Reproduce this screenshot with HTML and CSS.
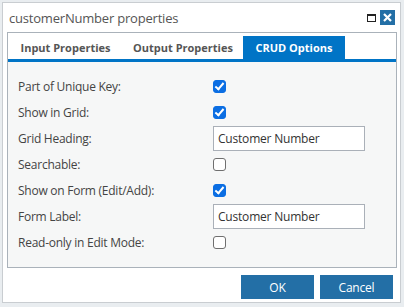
FILE: index.html
```html
<!DOCTYPE html>
<html lang="en">
<head>
    <meta charset="utf-8">
    <title>customerNumber properties</title>
    <link rel="stylesheet" href="styles.css">
</head>
<body>
    <div class="dialog">
        <div class="titlebar">
            <span class="title">customerNumber properties</span>
            <span class="max-btn"></span>
            <span class="close-btn">
                <svg width="15" height="15" viewBox="0 0 15 15">
                    <path d="M4 4 L11 11 M11 4 L4 11" stroke="#fff" stroke-width="2.2" fill="none"/>
                </svg>
            </span>
        </div>

        <div class="panel">
            <div class="tabs">
                <div class="tab">Input Properties</div>
                <div class="tab">Output Properties</div>
                <div class="tab active">CRUD Options</div>
            </div>
            <div class="form">
                <label class="lbl">Part of Unique Key:</label>
                <span class="check on"></span>

                <label class="lbl">Show in Grid:</label>
                <span class="check on"></span>

                <label class="lbl">Grid Heading:</label>
                <input class="txt" type="text" value="Customer Number">

                <label class="lbl">Searchable:</label>
                <span class="check"></span>

                <label class="lbl">Show on Form (Edit/Add):</label>
                <span class="check on"></span>

                <label class="lbl">Form Label:</label>
                <input class="txt" type="text" value="Customer Number">

                <label class="lbl">Read-only in Edit Mode:</label>
                <span class="check"></span>
            </div>
        </div>

        <div class="buttons">
            <button class="btn">OK</button>
            <button class="btn">Cancel</button>
        </div>
    </div>
</body>
</html>
```

FILE: styles.css
```css
body {
    margin: 0;
    padding: 2px;
    background: #e9edf0;
    font-family: 'Open Sans', sans-serif;
    height: 307px;
    box-sizing: border-box;
    overflow: hidden;
}

.dialog {
    width: 399px;
    height: 301px;
    box-sizing: border-box;
    background: #fff;
    border: 1px solid #c9cdd1;
    display: flex;
    flex-direction: column;
}

/* title bar */
.titlebar {
    height: 29px;
    display: flex;
    align-items: center;
    padding: 0 5px 0 6px;
}

.title {
    flex: 1;
    font-size: 13px;
    color: #555;
    letter-spacing: -0.2px;
}

.max-btn {
    width: 7px;
    height: 5px;
    border: 1.5px solid #222;
    border-top-width: 2px;
    margin-right: 4px;
}

.close-btn {
    width: 15px;
    height: 15px;
    background: #236fa6;
    display: flex;
}

/* tabbed panel */
.panel {
    margin: 0 3px 0 4px;
    height: 236px;
    box-sizing: border-box;
    border: 1px solid #aab2ba;
    display: flex;
    flex-direction: column;
}

.tabs {
    display: flex;
    height: 26px;
    border-bottom: 3px solid #0074c6;
    align-items: flex-end;
}

.tab {
    height: 23px;
    display: flex;
    align-items: center;
    justify-content: center;
    font-size: 11px;
    font-weight: 700;
    color: #555;
}

.tab:nth-child(1) { width: 115px; }
.tab:nth-child(2) { width: 120px; }
.tab:nth-child(3) { width: 102px; }

.tab.active {
    background: #0074c6;
    color: #fff;
}

.form {
    flex: 1;
    background: #f6f7f7;
    display: grid;
    grid-template-columns: 195px 1fr;
    grid-auto-rows: 26px;
    align-items: center;
    padding: 11px 0 0 10px;
}

.lbl {
    font-size: 12px;
    color: #444;
    letter-spacing: -0.25px;
}

.check {
    width: 13px;
    height: 13px;
    box-sizing: border-box;
    border: 1px solid #6f6f6f;
    border-radius: 3px;
    background: #fff;
    position: relative;
}

.check.on {
    border-color: #0b6ee3;
    background: #0b6ee3;
}

.check.on::after {
    content: '';
    position: absolute;
    left: 3px;
    top: 0px;
    width: 3px;
    height: 7px;
    border: solid #fff;
    border-width: 0 2px 2px 0;
    transform: rotate(40deg);
}

.txt {
    width: 152px;
    height: 25px;
    box-sizing: border-box;
    border: 1px solid #aab0b8;
    background: #fff;
    font-family: 'Open Sans', sans-serif;
    font-size: 12px;
    color: #333;
    padding: 0 4px;
    outline: none;
    letter-spacing: -0.2px;
}

/* footer buttons */
.buttons {
    display: flex;
    justify-content: flex-end;
    gap: 6px;
    padding: 7px 7px 0 0;
}

.btn {
    width: 73px;
    height: 24px;
    border: none;
    background: #236fa6;
    color: #fff;
    font-family: 'Open Sans', sans-serif;
    font-size: 12px;
    letter-spacing: -0.2px;
}
```
